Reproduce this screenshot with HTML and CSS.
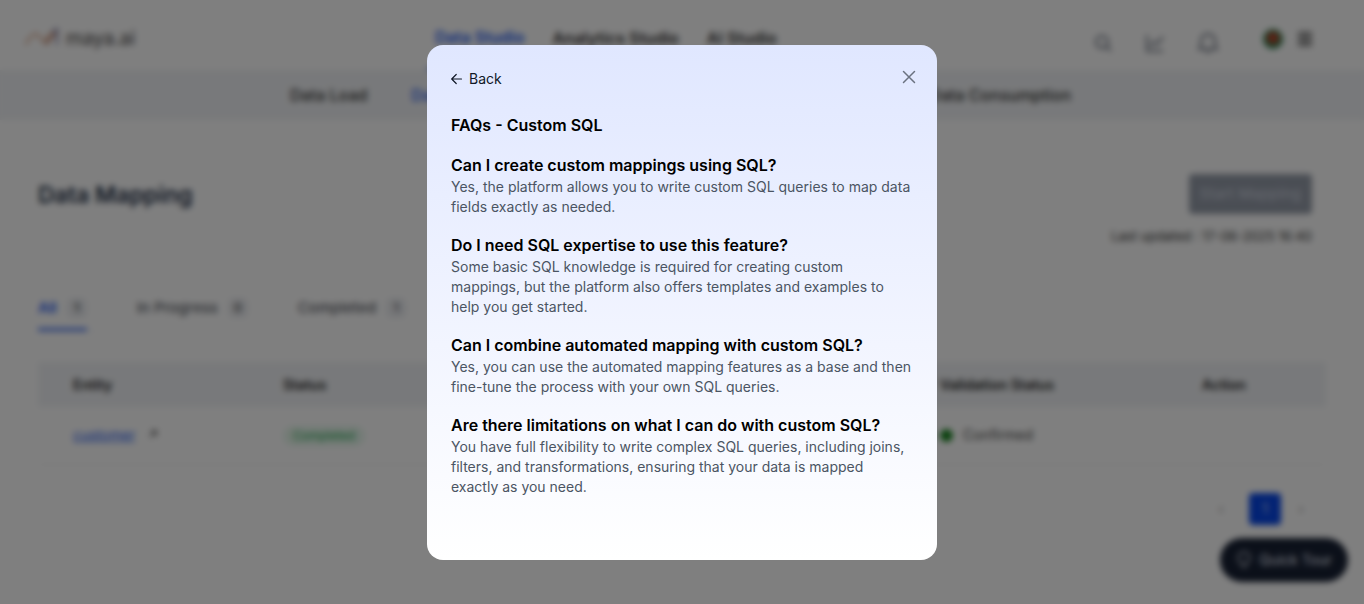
FILE: index.html
```html
<!DOCTYPE html>
<html lang="en">
<head>
<meta charset="utf-8">
<meta name="viewport" content="width=device-width, initial-scale=1">
<title>Data Mapping</title>
<link rel="stylesheet" href="styles.css">
</head>
<body>
<div class="app" inert>
  <header class="topbar">
    <a class="brand" href="#">
      <svg width="38" height="22" viewBox="0 0 38 22" fill="none" stroke-width="2" stroke-linecap="round" aria-hidden="true">
        <path d="M2 18C7 8 12 6 15 10s4 8 7 4 4-8 6-6" stroke="#d9a283"/>
        <path d="M22 18l9-11" stroke="#b0705c"/>
        <path d="M29 5l4-2v15" stroke="#8585ad"/>
      </svg>
      <span class="brand-name">maya.ai</span>
    </a>
    <nav class="main-nav" aria-label="Studios">
      <a class="main-link active" href="#">Data Studio</a>
      <a class="main-link" href="#">Analytics Studio</a>
      <a class="main-link" href="#">AI Studio</a>
    </nav>
    <div class="tools">
      <button class="tool" type="button" aria-label="Search"><svg width="20" height="20" viewBox="0 0 20 20" fill="none" stroke="currentColor" stroke-width="2"><circle cx="9" cy="9" r="6"/><path d="M13.500 13.500L18 18"/></svg></button>
      <button class="tool" type="button" aria-label="Reports"><svg width="20" height="20" viewBox="0 0 20 20" fill="none" stroke="currentColor" stroke-width="2"><path d="M2 2v16h16M5 13l4-4 3 2 6-7"/></svg></button>
      <button class="tool" type="button" aria-label="Notifications"><svg width="22" height="22" viewBox="0 0 22 22" fill="none" stroke="currentColor" stroke-width="2"><path d="M2 17h18l-2-3V9a7 7 0 0 0-14 0v5zM9 20h4"/></svg></button>
      <div class="account">
        <svg width="20" height="20" viewBox="0 0 20 20" aria-label="Profile" role="img"><circle cx="10" cy="10" r="10" fill="#2f7d4f"/><circle cx="10" cy="9" r="6" fill="#b8432c"/></svg>
        <button class="menu" type="button" aria-label="Menu"><svg width="16" height="16" viewBox="0 0 16 16" fill="none" stroke="currentColor" stroke-width="2"><path d="M1 2h14M1 6h14M1 10h14M1 14h14"/></svg></button>
      </div>
    </div>
  </header>
  <nav class="sub-nav" aria-label="Data Studio">
    <a class="sub-link" href="#">Data Load</a>
    <a class="sub-link active" href="#">Data Mapping</a>
    <a class="sub-link last" href="#">Data Consumption</a>
  </nav>
  <main class="content">
    <div class="page-head">
      <h1 class="page-title">Data Mapping</h1>
      <div class="head-actions">
        <button class="start" type="button">Start Mapping</button>
        <p class="updated">Last updated : 17-06-2025 16:40</p>
      </div>
    </div>
    <div class="tabs">
      <button class="tab active" type="button">All <span class="count">1</span></button>
      <button class="tab" type="button">In Progress <span class="count">0</span></button>
      <button class="tab" type="button">Completed <span class="count">1</span></button>
    </div>
    <table class="entities">
      <thead><tr><th class="col-entity">Entity</th><th class="col-status">Status</th><th class="col-valid">Validation Status</th><th>Action</th></tr></thead>
      <tbody><tr>
        <td><a class="entity" href="#">customer</a><svg class="open" width="8" height="8" viewBox="0 0 8 8" fill="none" stroke="#555" stroke-width="1.500" aria-hidden="true"><path d="M1 7l6-6M2 1h5v5"/></svg></td>
        <td><span class="pill">Completed</span></td>
        <td><span class="valid">Confirmed</span></td>
        <td></td>
      </tr></tbody>
    </table>
    <nav class="pager" aria-label="Pages">
      <button class="page-step" type="button" aria-label="Previous">‹</button>
      <button class="page-num" type="button">1</button>
      <button class="page-step" type="button" aria-label="Next">›</button>
    </nav>
  </main>
  <button class="tour" type="button">
    <svg width="16" height="18" viewBox="0 0 16 18" fill="none" stroke="currentColor" stroke-width="1.500" aria-hidden="true"><path d="M5 13c0-2-3-3-3-6a6 6 0 0 1 12 0c0 3-3 4-3 6zM6 16h4"/></svg>
    Quick Tour
  </button>
</div>

<div class="overlay">
  <section class="modal" role="dialog" aria-modal="true" aria-labelledby="faq-title">
    <div class="modal-bar">
      <button class="back" type="button">
        <svg width="12" height="12" viewBox="0 0 12 12" fill="none" stroke="currentColor" stroke-width="1.200" stroke-linecap="round" stroke-linejoin="round" aria-hidden="true"><path d="M10.500 6H1M5.200 1.500L.700 6l4.500 4.500"/></svg>
        Back
      </button>
      <button class="close" type="button" aria-label="Close">
        <svg width="14" height="14" viewBox="0 0 14 14" fill="none" stroke="currentColor" stroke-width="1.500" stroke-linecap="round"><path d="M1.500 1.500l11 11M12.500 1.500l-11 11"/></svg>
      </button>
    </div>
    <h2 class="faq-title" id="faq-title">FAQs - Custom SQL</h2>
    <dl class="faqs">
      <div><dt>Can I create custom mappings using SQL?</dt><dd>Yes, the platform allows you to write custom SQL queries to map data fields exactly as needed.</dd></div>
      <div><dt>Do I need SQL expertise to use this feature?</dt><dd>Some basic SQL knowledge is required for creating custom mappings, but the platform also offers templates and examples to help you get started.</dd></div>
      <div><dt>Can I combine automated mapping with custom SQL?</dt><dd>Yes, you can use the automated mapping features as a base and then fine-tune the process with your own SQL queries.</dd></div>
      <div><dt>Are there limitations on what I can do with custom SQL?</dt><dd>You have full flexibility to write complex SQL queries, including joins, filters, and transformations, ensuring that your data is mapped exactly as you need.</dd></div>
    </dl>
  </section>
</div>
</body>
</html>
```
FILE: styles.css
```css
* { box-sizing: border-box; }
body { margin: 0; font: 14px/20px Inter, "Liberation Sans", sans-serif; color: #111827; background: #fff; }
h1, h2, p, dl, dd { margin: 0; }
a { color: inherit; text-decoration: none; }
button { font: inherit; color: inherit; background: none; border: 0; padding: 0; }
svg { display: block; flex: none; }

.app { min-height: 100vh; overflow: hidden; }
.topbar { height: 70px; display: grid; grid-template-columns: 427px 1fr auto; padding-right: 51px; }
.brand { display: flex; align-items: center; gap: 4px; padding: 4px 0 0 24px; }
.brand-name { font-size: 19px; color: #444; padding-top: 4px; }
.main-nav { display: flex; gap: 12px; }
.main-link { display: flex; align-items: center; padding: 6px 8px 0; font-size: 16px; font-weight: 600; color: #333; }
.main-link.active { color: #1f5af0; border-bottom: 2px solid #1f5af0; }
.tools { display: flex; align-items: center; gap: 32px; padding-top: 16px; color: #6b7280; }
.account { display: flex; align-items: center; gap: 14px; margin: 0 0 8px 12px; color: #444; }

.sub-nav { height: 50px; display: flex; align-items: center; gap: 44px; padding: 0 293px 0 290px; background: #f1f3f6; font-size: 16px; font-weight: 500; color: #333; }
.sub-link.active { color: #1f5af0; }
.sub-link.last { margin-left: auto; }

.content { padding: 54px 38px 0; }
.page-head { display: flex; justify-content: space-between; padding-right: 14px; }
.page-title { font-size: 23px; line-height: 42px; font-weight: 600; color: #1f2f46; }
.head-actions { display: flex; flex-direction: column; align-items: flex-end; gap: 12px; }
.start { height: 40px; padding: 0 11px; border-radius: 4px; background: #959ca9; color: #c8cedb; font-weight: 500; font-size: 15px; }
.updated { font-size: 13px; color: #333; }

.tabs { display: flex; gap: 50px; margin-top: 44px; border-bottom: 1px solid #f3f4f6; }
.tab { display: flex; align-items: center; gap: 10px; padding: 8px 0 10px; font-size: 15px; font-weight: 500; color: #5b6068; border-bottom: 3px solid transparent; }
.tab.active { color: #1f5af0; border-color: #3d6df0; font-weight: 600; }
.count { min-width: 20px; padding: 0 6px; border-radius: 6px; background: #eceef2; color: #444; font-size: 12px; text-align: center; }

.entities { width: 100%; margin-top: 30px; border-collapse: collapse; table-layout: fixed; }
.entities th { height: 45px; padding: 0 0 0 35px; text-align: left; font-weight: 600; background: #f1f3f6; color: #222; }
.entities td { height: 57px; padding: 0 0 0 35px; border-bottom: 1px solid #f0f0f0; }
.col-entity { width: 210px; }
.col-status { width: 657px; }
.col-valid { width: 262px; }
.entity { color: #1f5af0; text-decoration: underline; }
.open { display: inline-block; margin-left: 14px; vertical-align: 2px; }
.pill { display: inline-block; padding: 0 10px; border-radius: 10px; background: #e6f7ec; color: #16a34a; font-size: 12px; }
.valid { display: flex; align-items: center; gap: 10px; color: #444; }
.valid::before { content: ""; width: 13px; height: 13px; border-radius: 50%; background: #16821d; }

.pager { display: flex; justify-content: flex-end; align-items: center; gap: 16px; margin-top: 28px; padding-right: 21px; }
.page-step { width: 8px; color: #999; }
.page-num { width: 32px; height: 32px; margin-left: 8px; border-radius: 4px; background: #0646e8; color: #c9d5f8; }
.tour { position: fixed; right: 16px; bottom: 22px; height: 44px; display: flex; align-items: center; gap: 7px; padding: 0 16px; border-radius: 22px; background: #172033; color: #d5dae5; font-weight: 500; }

.overlay { position: fixed; inset: 0; display: flex; align-items: center; justify-content: center; background: rgb(0 0 0 / 50%); backdrop-filter: blur(3px); }
.modal { width: 510px; max-width: 100%; max-height: 100%; overflow: auto; padding: 24px 24px 63px; border-radius: 16px; background: linear-gradient(#e0e7ff, #fff); color: #000; }
.modal-bar { display: flex; justify-content: space-between; align-items: flex-start; margin-right: -4px; }
.back { display: flex; align-items: center; gap: 6px; color: #111827; }
.close { padding: 1px; color: #6b7280; }
.faq-title { margin: 24px 0 16px; font-size: 16px; line-height: 24px; font-weight: 600; }
.faqs { display: grid; gap: 16px; }
.faqs dt { font-size: 16px; line-height: 24px; font-weight: 600; }
.faqs dd { color: #4b5563; }
```
